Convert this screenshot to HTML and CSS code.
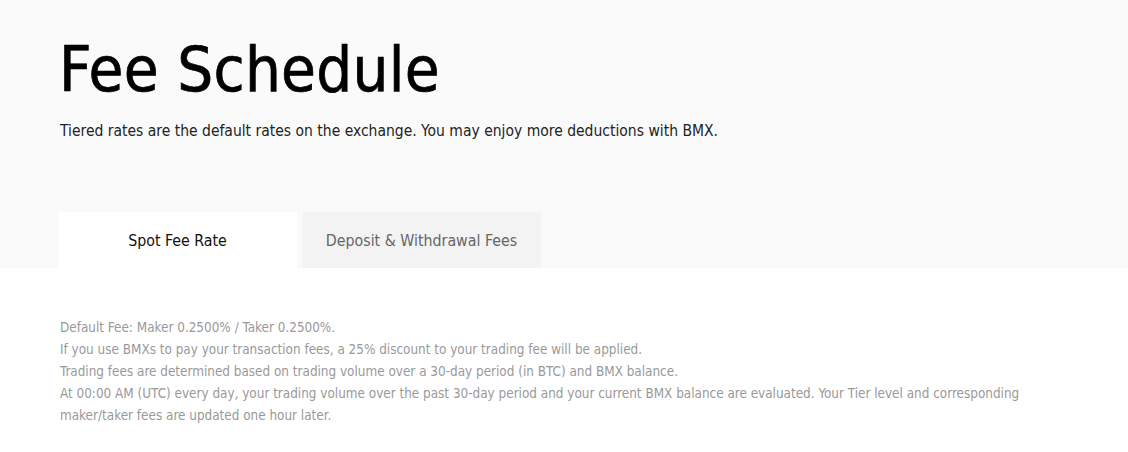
FILE: index.html
```html
<!DOCTYPE html>
<html>
<head>
<meta charset="utf-8">
<link rel="stylesheet" href="styles.css">
</head>
<body>
<header class="hero">
  <div class="container">
    <h1 class="title">Fee Schedule</h1>
    <p class="subtitle">Tiered rates are the default rates on the exchange. You may enjoy more deductions with BMX.</p>
    <nav class="tabs">
      <div class="tab tab-active">Spot Fee Rate</div>
      <div class="tab">Deposit &amp; Withdrawal Fees</div>
    </nav>
  </div>
</header>
<main class="content">
  <div class="container">
    <div class="notes">
      <p>Default Fee: Maker 0.2500% / Taker 0.2500%.</p>
      <p>If you use BMXs to pay your transaction fees, a 25% discount to your trading fee will be applied.</p>
      <p>Trading fees are determined based on trading volume over a 30-day period (in BTC) and BMX balance.</p>
      <p>At 00:00 AM (UTC) every day, your trading volume over the past 30-day period and your current BMX balance are evaluated. Your Tier level and corresponding maker/taker fees are updated one hour later.</p>
    </div>
  </div>
</main>
</body>
</html>
```
FILE: styles.css
```css
* { box-sizing: border-box; }
html, body { margin: 0; padding: 0; }
body {
  font-family: "DejaVu Sans Condensed", "DejaVu Sans", sans-serif;
  font-stretch: condensed;
  background: #ffffff;
  color: #000;
}
.container {
  width: 1010px;
  margin-left: 58px;
}
.hero {
  background: #fafafa;
  padding-top: 35px;
}
.title {
  margin: 0 0 0 1px;
  font-weight: 400;
  font-size: 63px;
  line-height: 70px;
  letter-spacing: 0.3px;
  color: #000;
  -webkit-text-stroke: 0.7px #000;
}
.subtitle {
  margin: 16px 0 0 2px;
  font-size: 15.5px;
  line-height: 20px;
  color: #222;
}
.tabs {
  display: flex;
  gap: 5px;
  margin-top: 71px;
}
.tab {
  width: 239px;
  height: 56px;
  display: flex;
  align-items: center;
  justify-content: center;
  background: #f3f3f3;
  color: #666;
  font-size: 15.8px;
  border-radius: 2px 2px 0 0;
}
.tab-active {
  background: #ffffff;
  color: #111;
}
.content {
  padding-top: 49px;
}
.notes {
  margin-left: 2px;
  font-size: 13.4px;
  line-height: 22px;
  color: #999;
}
.notes p { margin: 0; }
```
